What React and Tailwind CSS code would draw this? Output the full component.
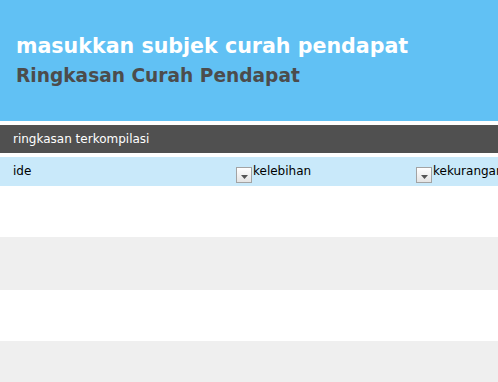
import React from 'react';

const FilterButton = () => (
    <span className="flex h-4 w-4 items-center justify-center border border-[#a3a3a3] bg-gradient-to-b from-white to-[#e4e4e4]">
        <svg width="7" height="4" viewBox="0 0 7 4" className="mt-[3px]">
            <path d="M0 0h7L3.5 4z" fill="#555" />
        </svg>
    </span>
);

const rows = ['bg-white h-[51px]', 'bg-[#efefef] h-[53px]', 'bg-white h-[51px]', 'bg-[#efefef] h-[41px]'];

export default function App() {
    return (
        <div className="h-[382px] w-[498px] overflow-hidden bg-white font-['DejaVu_Sans',sans-serif]">
            <header className="h-[121px] bg-[#61c1f4] pl-4 pt-[32px]">
                <h1 className="text-[20.6px] leading-[28px] font-bold text-white">masukkan subjek curah pendapat</h1>
                <h2 className="mt-[2px] text-[18.6px] leading-[27px] font-bold text-[#4c4c4c]">Ringkasan Curah Pendapat</h2>
            </header>
            <div className="mt-1 flex h-[28px] items-center bg-[#505050] pl-[13px] text-[12px] text-white">
                ringkasan terkompilasi
            </div>
            <div className="mt-1 grid h-[29px] grid-cols-[253px_180px_1fr] bg-[#c9e9fa] text-[12px] text-black">
                <div className="flex items-start justify-between pr-[1px] pl-[13px]">
                    <span className="pt-[5px]">ide</span>
                    <span className="pt-[10px]"><FilterButton /></span>
                </div>
                <div className="flex items-start justify-between pr-[1px]">
                    <span className="pt-[5px]">kelebihan</span>
                    <span className="pt-[10px]"><FilterButton /></span>
                </div>
                <div className="flex items-start overflow-hidden whitespace-nowrap">
                    <span className="pt-[5px]">kekurangan</span>
                </div>
            </div>
            {rows.map((r, i) => (
                <div key={i} className={r} />
            ))}
        </div>
    );
}
